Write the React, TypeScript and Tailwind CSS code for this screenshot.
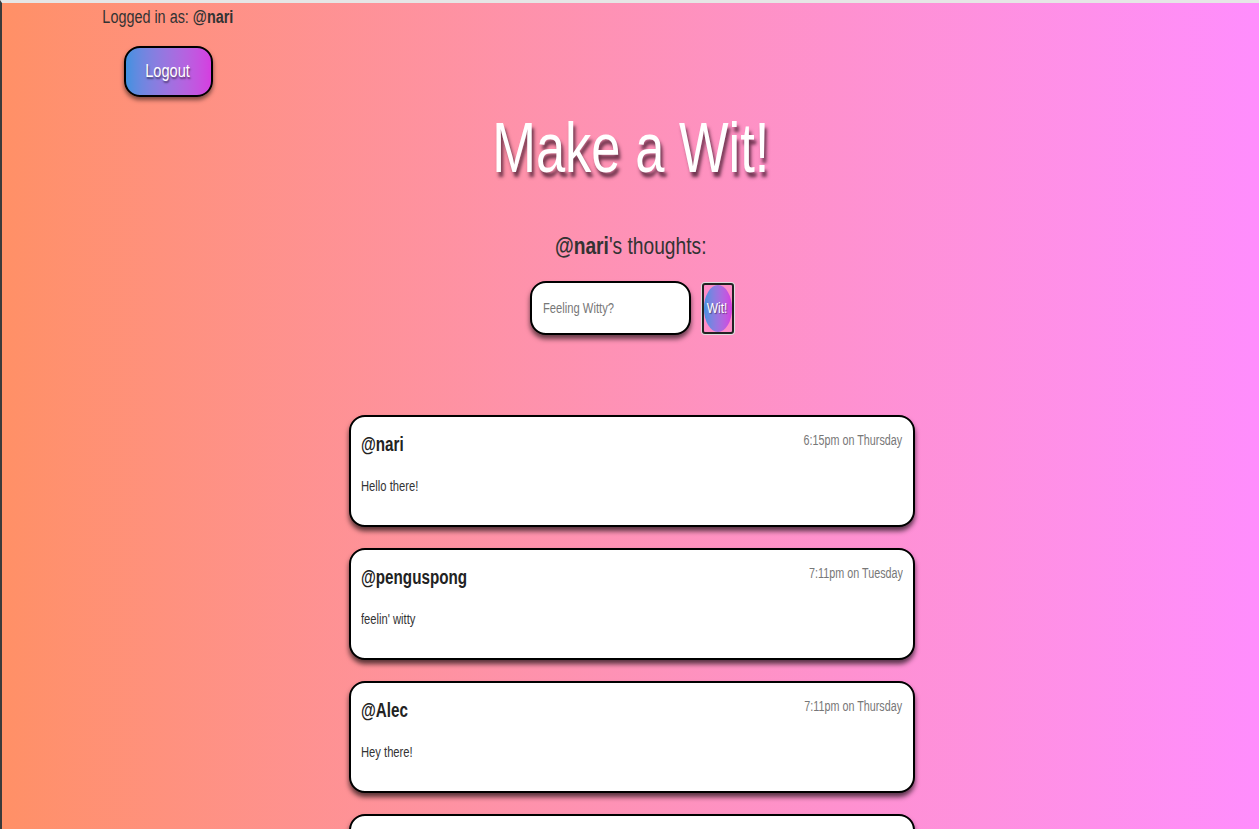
import React from "react";

const wits = [
  { id: 1, user: "nari", time: "6:15pm on Thursday", text: "Hello there!" },
  { id: 2, user: "penguspong", time: "7:11pm on Tuesday", text: "feelin' witty" },
  { id: 3, user: "Alec", time: "7:11pm on Thursday", text: "Hey there!" },
  { id: 4, user: "nari", time: "7:20pm on Thursday", text: "Another one" },
];

function WitCard({ user, time, text }: { user: string; time: string; text: string }) {
  return (
    <div className="w-[566px] h-[112px] shrink-0 bg-white border-2 border-black rounded-[16px] shadow-[0_4px_5px_rgba(0,0,0,0.65)] px-[10px] pt-[14px]">
      <div className="flex justify-between items-start">
        <span className="inline-block origin-left scale-x-[0.76] text-[20px] font-bold text-[#222] leading-[26px]">@{user}</span>
        <span className="inline-block origin-right scale-x-[0.77] text-[14px] text-[#777] leading-[18px]">{time}</span>
      </div>
      <p className="origin-left scale-x-[0.8] text-[14px] text-[#333] mt-[20px] leading-[18px]">{text}</p>
    </div>
  );
}

export default function App() {
  return (
    <div
      className="h-[829px] overflow-hidden border-t-[3px] border-[#e6e6e6] border-l-2 border-l-[#3a3a3a] bg-gradient-to-r from-[#ff9066] to-[#ff8dfd]"
      style={{ fontFamily: '"Liberation Sans", Arial, sans-serif' }}
    >
      <div className="w-[332px] flex flex-col items-center">
        <p className="inline-block scale-x-[0.8] text-[18px] text-[#333] leading-[22px] mt-[3px]">
          Logged in as: <span className="font-bold">@nari</span>
        </p>
        <button className="mt-[18px] w-[89px] h-[51px] rounded-[16px] border-2 border-black bg-gradient-to-r from-[#3f91e0] to-[#d53de0] text-white text-[18px] shadow-[0_3px_4px_rgba(0,0,0,0.5)]">
          <span className="inline-block scale-x-[0.81] [text-shadow:1px_2px_2px_rgba(0,0,0,0.5)]">Logout</span>
        </button>
      </div>

      <h1 className="mt-[11px] text-center text-[70px] leading-[80px] text-white">
        <span className="inline-block scale-x-[0.75] [text-shadow:3px_5px_4px_rgba(60,20,40,0.75)]">Make a Wit!</span>
      </h1>

      <p className="mt-[44px] text-center text-[24px] leading-[28px] text-[#333]">
        <span className="inline-block scale-x-[0.8]">
          <span className="font-bold">@nari</span>'s thoughts:
        </span>
      </p>

      <div className="mt-[21px] flex justify-center items-center gap-[11px] pl-[2px]">
        <div className="relative">
          <input
            aria-label="Feeling Witty?"
            className="w-[161px] h-[54px] rounded-[16px] border-2 border-black bg-white px-[12px] text-[14px] text-[#333] shadow-[0_4px_5px_rgba(0,0,0,0.6)] outline-none"
          />
          <span className="pointer-events-none absolute left-[13px] top-[18px] origin-left scale-x-[0.8] text-[14px] leading-[18px] text-[#777]">
            Feeling Witty?
          </span>
        </div>
        <button className="w-[32px] h-[51px] border-2 border-[#222] rounded-[3px] bg-[#ff8cc8] p-0 shadow-[0_0_0_1px_#ddd]">
          <span className="flex h-full w-full items-center justify-center rounded-[50%] bg-gradient-to-r from-[#3f91e0] to-[#d53de0] text-white text-[14px]">
            <span className="inline-block scale-x-[0.85] [text-shadow:1px_1px_1px_rgba(0,0,0,0.4)]">Wit!</span>
          </span>
        </button>
      </div>

      <div className="mt-[80px] flex flex-col items-center gap-[21px] pl-[2px]">
        {wits.map((w) => (
          <WitCard key={w.id} user={w.user} time={w.time} text={w.text} />
        ))}
      </div>
    </div>
  );
}
